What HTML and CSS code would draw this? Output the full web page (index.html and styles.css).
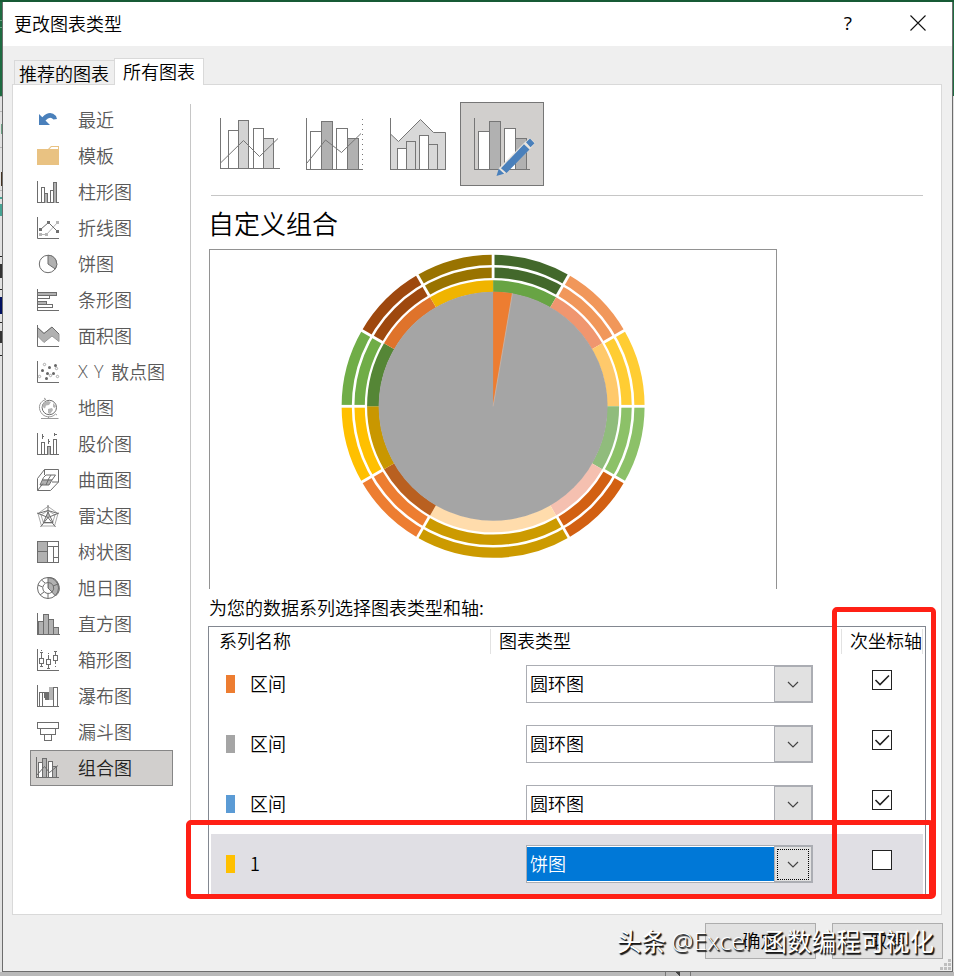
FILE: index.html
```html
<!DOCTYPE html>
<html lang="zh-CN">
<head>
<meta charset="utf-8">
<title>更改图表类型</title>
<link rel="stylesheet" href="styles.css">
</head>
<body>
<div class="desktop">
<div class="backdrop" aria-hidden="true">
<svg width="954" height="976" viewBox="0 0 954 976" shape-rendering="crispEdges">
<rect width="954" height="976" fill="#e1e1e1"/><rect width="954" height="96" fill="#1e6b41"/><rect y="0" width="954" height="2" fill="#175a35"/>
<path d="M0 96h3M0 111.5h3M0 147.5h3M0 190.5h3" stroke="#b5b5b5"/>
<path d="M0 256.5h3M0 289.5h3M0 322.5h3M0 355.5h3" stroke="#222"/>
<path d="M1.5 172v14" stroke="#432"/><path d="M0 198h2M1 204v12" stroke="#45a393" stroke-width="2"/><path d="M1 297v17" stroke="#001060" stroke-width="2"/><path d="M1 264v14M1 331v12" stroke="#333" stroke-width="2"/><path d="M0 20h2v7h-2M1 124v10" stroke="#6aa183" fill="none"/>
<rect y="972" width="954" height="4" fill="#b9b9b9"/><path d="M665.500 972v4M690 972v4" stroke="#777"/><path d="M675 972h5v4z" fill="#444"/>
</svg>
</div>
<main class="dialog">
<header class="titlebar"><h1>更改图表类型</h1>
<span class="help">?</span>
<svg class="close" width="16" height="16" viewBox="0 0 16 16"><path d="M.5.500l15 15M15.500.500l-15 15"/></svg>
</header>
<nav class="tabs"><span class="tab">推荐的图表</span><span class="tab active">所有图表</span></nav>
<section class="panel">
<ul class="types">
<li><svg class="ic" viewBox="0 0 24 24"><path d="M3 6l3.300 3.200Q14 1.500 20 8l1 3-3.500.500Q14 7.500 9.500 12.500L14 17H3z" fill="#4a80bb"/></svg>最近</li>
<li><svg class="ic" viewBox="0 0 24 24"><path d="M1 5h11l3-3h8v19H1z" fill="#e9c282"/><path d="M13.500 5l2-2H22v2z" fill="#fff" class="plain"/></svg>模板</li>
<li><svg class="ic px" viewBox="0 0 24 24"><path d="M1.500 1v21.500H23M5.500 22V7.500h3V22M14.500 22V10.500h3"/><path class="g" d="M8.500 22.500v-9h3v9M17.500 22.500v-20h3v20"/></svg>柱形图</li>
<li><svg class="ic" viewBox="0 0 24 24"><path d="M1.500 1v21.500H23"/><path d="M4.500 18.500h6l11-12" style="stroke:#b5b5b5"/><path d="M4.500 13.500l8-7 9 9"/><path d="M3 17h3v3H3zM9 17h3v3H9zM20 5h3v3h-3z" fill="#b5b5b5" style="stroke:none"/><path d="M3 12h3v3H3zM11 5h3v3h-3zM20 14h3v3h-3z" fill="#707070" style="stroke:none"/></svg>折线图</li>
<li><svg class="ic" viewBox="0 0 24 24"><circle cx="12" cy="12" r="8.700"/><path class="g" d="M12 3.300V12l7.300 5A8.700 8.700 0 0 0 12 3.300z"/></svg>饼图</li>
<li><svg class="ic px" viewBox="0 0 24 24"><path d="M1.500 1v21.500H23M1.500 10.500h12v-3M1.500 16.500h15v3H1.500"/><path class="g" d="M1.500 4.500h19v3h-19zM1.500 13.500h9v3h-9z"/></svg>条形图</li>
<li><svg class="ic" viewBox="0 0 24 24"><path class="g" d="M1.500 3.500L8 9.500 16 3l7 7v7.500L16 12l-8 6.500L1.500 12z" style="stroke:#999"/><path d="M1.500 1v21.500H23M1.500 3.500L8 9.500 16 3l7 7"/></svg>面积图</li>
<li><svg class="ic" viewBox="0 0 24 24"><path d="M1.500 1v21.500H23"/><g fill="#666" style="stroke:none"><circle cx="6.500" cy="10.500" r="1.500"/><circle cx="13.500" cy="7.500" r="1.500"/><circle cx="19.500" cy="5.500" r="1.500"/><circle cx="11.500" cy="13.500" r="1.500"/><circle cx="17.500" cy="13.500" r="1.500"/><circle cx="10.500" cy="18.500" r="1.500"/></g><g style="stroke:#aaa"><circle cx="8.500" cy="4.500" r="1.200"/><circle cx="20.500" cy="8.500" r="1.200"/><circle cx="3.500" cy="16.500" r="1.200"/><circle cx="14.500" cy="15.500" r="1.200"/><circle cx="21.500" cy="16.500" r="1.200"/></g></svg><span class="latin">X Y </span>散点图</li>
<li><svg class="ic" viewBox="0 0 24 24"><path d="M8 2l2 1.500C4 5 1.500 11 5 16.500c3 5 10.500 6 14.500 1.500l1.500 1M12.500 20.500v2M5 22.500h17.500" style="stroke:#999"/><circle cx="13.300" cy="11.500" r="7.200"/><path d="M8 6l4-1 3 1-2 3-3 .5-1 3-3-2zM12 13l4-1 1 2-3 4-2-1zM17 7l3 3-1 2-2-1z" fill="#b5b5b5" style="stroke:none"/></svg>地图</li>
<li><svg class="ic px" viewBox="0 0 24 24"><path d="M1.500 1v21.500H23M5.500 22V10.500h3V22M17.500 22V7.500h3V22M6.500 2v5M6 4.500h2M12.500 7v5M12 9.500h2M18.500 1v3M18 2.500h3"/><path class="g" d="M11.500 22.500v-8h3v8"/></svg>股价图</li>
<li><svg class="ic" viewBox="0 0 24 24"><path class="g" d="M4 17l3-5.500h9L13 17z" style="stroke:none"/><path d="M1.500 10.500l7-9h14V14l-8 8.500h-13zM1.500 22.500L7 15.500M8.500 1.500V7M22.500 14H16M4 17l3.500-7.500L10 7h9.500L16 12l-3 5zM6 12h10M10 17l2.500-6L15 7"/></svg>曲面图</li>
<li><svg class="ic" viewBox="0 0 24 24"><path d="M12 2.500l10 7L18.500 22h-13L2 9.500zM12 6.500l7 4.500-2.500 8h-9L5 11z" style="stroke:#aaa"/><path d="M12 1v12.500L1 9M12 13.500L23 9M12 13.500l7.500 9.500M12 13.500L4.500 23M2 9.500l10-3 10 3M7.500 18.500L12 8l5 10.500z"/></svg>雷达图</li>
<li><svg class="ic px" viewBox="0 0 24 24"><path class="g" d="M1.500 1.500h10v21h-10z"/><path d="M11.500 1.500h11v21h-11M1.500 11.500h10M11.500 6.500h11M17.500 6.500v16M17.500 17.500h5"/></svg>树状图</li>
<li><svg class="ic" viewBox="0 0 24 24"><path class="g" d="M12 1.500V12l7.500 8A10.500 10.500 0 0 0 12 1.500z"/><circle cx="12" cy="12" r="10.500"/><path d="M12 6.500a5.500 5.500 0 1 0 4 9.500L12 12z" fill="#fff"/><path d="M12 6.500a5.500 5.500 0 0 1 4 9.500M6.500 11L2 9M8 16l-4 3M12 17.500v5M17 10l5-2M9 7L5.500 4"/></svg>旭日图</li>
<li><svg class="ic px" viewBox="0 0 24 24"><path class="g" d="M2.500 22.500v-13h5v13zM7.500 22.500v-20h5v20zM12.500 22.500v-15h5v15zM17.500 22.500v-7h5v7z"/><path d="M1.500 1v21.500H24"/></svg>直方图</li>
<li><svg class="ic px" viewBox="0 0 24 24"><path d="M1.500 1v21.500H23M3.500 10.500h4v5h-4zM10.500 11.500h4v5h-4zM17.500 7.500h4v5h-4zM5.500 4v6M5.500 16v3M4 18.500h3M4 4.500h3M12.500 7v4M12.500 17v3M11 20.500h3M12 5.500h1M19.500 3v4M19.500 13v3M18 3.500h3M19 18.500h1M5 2.500h1"/></svg>箱形图</li>
<li><svg class="ic px" viewBox="0 0 24 24"><path d="M1.500 1v21.500H23M3.500 22V8.500h3V22M6.500 8.500h2M17.500 22V3.500h4V22"/><path d="M8 8h5v8H9v-2H8z" fill="#707070" style="stroke:none"/><path d="M13 3h4v13h-4z" fill="#b5b5b5" style="stroke:none"/></svg>瀑布图</li>
<li><svg class="ic px" viewBox="0 0 24 24"><path d="M1.500 2.500h21v6h-21zM4.500 8.500h15v6h-15zM8.500 14.500h7v6h-7z"/></svg>漏斗图</li>
<li class="selected"><svg class="ic" viewBox="0 0 24 24"><g shape-rendering="crispEdges"><path d="M2.500 21.500v-15h4v15M12.500 21.500v-16h4v16" fill="#fff"/><path class="g" d="M6.500 21.500v-19h4v19M16.500 21.500v-11h4v11"/><path d="M.500 1v20.500H23"/></g><path d="M1 19l7.500-8.500 5 6 8.500-7"/></svg>组合图</li>
</ul>
<div class="content">
<div class="variants">
<svg class="variant" viewBox="0 0 84 84"><g shape-rendering="crispEdges"><path d="M20.500 66.500v-38h10v38M45.500 66.500v-40h10v40" fill="#fff"/><path d="M30.500 66.500v-48h10v48M55.500 66.500v-30h10v30" fill="#d3d3d3"/><path d="M12.500 16v50.500H72"/></g><path d="M12.500 61l23-22.500 16 16L70 36.500"/></svg>
<svg class="variant" viewBox="0 0 84 84"><g shape-rendering="crispEdges"><path d="M18.500 67.500v-38h11v38M44.500 67.500v-41h11v41" fill="#fff"/><path d="M29.500 67.500v-48h11v48M55.500 67.500v-31h11v31" fill="#b1b1b1"/><path d="M14.500 16v51.500H71"/><path d="M70.500 17v50" stroke-dasharray="1 4"/></g><path d="M15 61l18.500-23 16 12.500L69 31.500"/></svg>
<svg class="variant" viewBox="0 0 84 84"><path d="M14.500 32l8 7.500 22-22 13 13H70v37H14.500z" fill="#d8d8d8" style="stroke:none"/><path d="M14.500 32l8 7.500 22-22 13 13H69.500v37"/><g shape-rendering="crispEdges"><path d="M21.500 67.500v-21h9v21M43.500 67.500v-34h9v34" fill="#fff"/><path d="M30.500 67.500v-28h9v28M52.500 67.500v-25h9v25" fill="#d8d8d8"/><path d="M14.500 16v51.500H70"/></g></svg>
<svg class="variant chosen" viewBox="0 0 84 84"><g shape-rendering="crispEdges"><path d="M.500.500h83v83H.500z" fill="#d1cfcd"/><path d="M18.500 67.500v-38h11v38M44.500 67.500v-41h11v41" fill="#fff"/><path d="M29.500 67.500v-48h11v48M55.500 67.500v-31h11v31" fill="#b1b1b1"/><path d="M14.500 16v51.500H70"/></g><path d="M37 74l2-8 27-27 4-3 5 5-4 5-27 26z" fill="#e8e4df" style="stroke:none"/><path d="M36.500 74l2.200-7.200 5.500 5zM41 66.200L64 42.300l5.500 5.200L46.500 71zM66 40.300L70 36.500l4.500 4.800-4 4z" fill="#4a80bb" style="stroke:none"/></svg>
</div>
<h2>自定义组合</h2>
<div class="chart">
<svg width="566" height="338" viewBox="210 250 566 338"><g transform="translate(493.100 406.300)">
<g transform="rotate(-90)" fill="none">
<g class="outer">
<circle r="139.900" stroke="#43682b" pathLength="360" stroke-dasharray="30 330"/>
<circle r="139.900" stroke="#f1975a" transform="rotate(30)" pathLength="360" stroke-dasharray="30 330"/>
<circle r="139.900" stroke="#ffcd33" transform="rotate(60)" pathLength="360" stroke-dasharray="30 330"/>
<circle r="139.900" stroke="#8cc168" transform="rotate(90)" pathLength="360" stroke-dasharray="30 330"/>
<circle r="139.900" stroke="#d26012" transform="rotate(120)" pathLength="360" stroke-dasharray="30 330"/>
<circle r="139.900" stroke="#cc9a00" transform="rotate(150)" pathLength="360" stroke-dasharray="60 300"/>
<circle r="139.900" stroke="#ed7d31" transform="rotate(210)" pathLength="360" stroke-dasharray="30 330"/>
<circle r="139.900" stroke="#ffc000" transform="rotate(240)" pathLength="360" stroke-dasharray="30 330"/>
<circle r="139.900" stroke="#70ad47" transform="rotate(270)" pathLength="360" stroke-dasharray="30 330"/>
<circle r="139.900" stroke="#9e480e" transform="rotate(300)" pathLength="360" stroke-dasharray="30 330"/>
<circle r="139.900" stroke="#997300" transform="rotate(330)" pathLength="360" stroke-dasharray="30 330"/>
</g>
<circle r="140" stroke="#fff" stroke-width="2.600"/>
<g stroke="#fff" stroke-width="2.800"><path id="ray" d="M126 0h28"/><use href="#ray" transform="rotate(30)"/><use href="#ray" transform="rotate(60)"/><use href="#ray" transform="rotate(90)"/><use href="#ray" transform="rotate(120)"/><use href="#ray" transform="rotate(150)"/><use href="#ray" transform="rotate(210)"/><use href="#ray" transform="rotate(240)"/><use href="#ray" transform="rotate(270)"/><use href="#ray" transform="rotate(300)"/><use href="#ray" transform="rotate(330)"/></g>
<g class="inner">
<circle r="120" stroke="#68a444" pathLength="360" stroke-dasharray="30 330"/>
<circle r="120" stroke="#f0966f" transform="rotate(30)" pathLength="360" stroke-dasharray="30 330"/>
<circle r="120" stroke="#ffc96b" transform="rotate(60)" pathLength="360" stroke-dasharray="30 330"/>
<circle r="120" stroke="#90bc7c" transform="rotate(90)" pathLength="360" stroke-dasharray="30 330"/>
<circle r="120" stroke="#f5c0b0" transform="rotate(120)" pathLength="360" stroke-dasharray="30 330"/>
<circle r="120" stroke="#ffdcac" transform="rotate(150)" pathLength="360" stroke-dasharray="60 300"/>
<circle r="120" stroke="#b96020" transform="rotate(210)" pathLength="360" stroke-dasharray="30 330"/>
<circle r="120" stroke="#c99700" transform="rotate(240)" pathLength="360" stroke-dasharray="30 330"/>
<circle r="120" stroke="#558636" transform="rotate(270)" pathLength="360" stroke-dasharray="30 330"/>
<circle r="120" stroke="#df732b" transform="rotate(300)" pathLength="360" stroke-dasharray="30 330"/>
<circle r="120" stroke="#f0b400" transform="rotate(330)" pathLength="360" stroke-dasharray="30 330"/>
</g></g>
<circle r="114.500" fill="#a5a5a5"/><path d="M0 0V-114.500A114.500 114.500 0 0 1 19.300 -112.900z" fill="#ed7d31"/><path d="M0 0L19.300 -112.900" stroke="#c9b8ad" stroke-width=".8"/>
</g></svg>
</div>
<p class="caption">为您的数据系列选择图表类型和轴:</p>
<div class="table">
<div class="row head"><span>系列名称</span><span>图表类型</span><span>次坐标轴</span></div>
<div class="row"><span class="name"><i class="key orange"></i>区间</span><div class="combo"><span>圆环图</span><b><svg viewBox="0 0 12 7"><path d="M1 1l5 5 5-5"/></svg></b></div><div class="check"><svg viewBox="0 0 20 20"><path d="M3.500 10l4.500 4.500L17 5.500"/></svg></div></div>
<div class="row"><span class="name"><i class="key gray"></i>区间</span><div class="combo"><span>圆环图</span><b><svg viewBox="0 0 12 7"><path d="M1 1l5 5 5-5"/></svg></b></div><div class="check"><svg viewBox="0 0 20 20"><path d="M3.500 10l4.500 4.500L17 5.500"/></svg></div></div>
<div class="row"><span class="name"><i class="key blue"></i>区间</span><div class="combo"><span>圆环图</span><b><svg viewBox="0 0 12 7"><path d="M1 1l5 5 5-5"/></svg></b></div><div class="check"><svg viewBox="0 0 20 20"><path d="M3.500 10l4.500 4.500L17 5.500"/></svg></div></div>
<div class="row current"><span class="name"><i class="key yellow"></i>1</span><div class="combo"><span>饼图</span><b><svg viewBox="0 0 12 7"><path d="M1 1l5 5 5-5"/></svg></b></div><div class="check"></div></div>
</div>
</div>
</section>
<footer class="actions"><button>确定</button><button>取消</button></footer>
<svg class="grip" width="11" height="11" viewBox="0 0 11 11"><path d="M8 0h3v3H8zM4 4h3v3H4zM8 4h3v3H8zM0 8h3v3H0zM4 8h3v3H4zM8 8h3v3H8z"/></svg>
</main>
<div class="mark mark-column"></div>
<div class="mark mark-row"></div>
<div class="watermark">头条 <span>@Excel</span>函数编程可视化</div>
</div>
</body>
</html>
```
FILE: styles.css
```css
* { box-sizing: border-box; }
body { margin: 0; font: 350 18px/24px "Noto Sans CJK SC", sans-serif; color: #000; }
h1, h2, p, ul { margin: 0; padding: 0; font-weight: inherit; }
svg { display: block; }
.desktop { position: relative; width: 954px; height: 976px; overflow: hidden; padding: 2px 1px 4px 2px; }
.backdrop { position: absolute; inset: 0; }
.dialog { position: relative; height: 970px; background: #efefef; border: 1px solid #6d6d6d; border-top: 0; display: flex; flex-direction: column; }
.titlebar { height: 44px; background: #fff; display: flex; align-items: center; padding: 0 26px 2px 11px; flex: none; }
.titlebar h1 { flex: 1; font-size: 18px; }
.help { font: 19px "Open Sans", sans-serif; margin-right: 58px; }
.close { stroke: #111; stroke-width: 1.1; fill: none; }
.tabs { height: 39px; padding: 12px 0 0 11px; display: flex; align-items: flex-end; position: relative; z-index: 1; margin-bottom: -1px; flex: none; }
.tab { height: 25px; width: 100px; border: 1px solid #d9d9d9; border-right: 0; border-bottom: 0; padding-left: 4px; line-height: 24px; white-space: nowrap; }
.tab.active { height: 27px; width: 90px; background: #fff; border-right: 1px solid #d9d9d9; padding-left: 8px; line-height: 24px; }
.panel { width: 930px; height: 831px; margin-left: 9px; border: 1px solid #d9d9d9; background: #fff; display: flex; padding-top: 17px; flex: none; }
.types { list-style: none; width: 178px; height: 795px; margin-top: 2px; border-right: 1px solid #c6c6c6; padding: 0 17px; flex: none; color: #595959; }
.types li { height: 36px; width: 143px; padding-left: 6px; display: flex; align-items: center; white-space: pre; line-height: 24px; padding-bottom: 2px; }
.types li:first-child { margin-top: -2px; }
.types .selected { background: #d1cfcd; box-shadow: inset 0 0 0 1px #868686; color: #222; }
.ic { width: 24px; height: 24px; margin: 2px 18px 0 0; flex: none; fill: none; }
.ic path, .ic circle { stroke: #6d6d6d; }
.ic path[fill="#4a80bb"], .ic path[fill="#e9c282"], .ic .plain { stroke: none; }
.ic g[style] circle { stroke: inherit; }
.ic .g { fill: #b1b1b1; }
.px { shape-rendering: crispEdges; }
.latin { font-family: "Open Sans", sans-serif; font-weight: 300; letter-spacing: .4px; word-spacing: .8px; width: 33px; }
.content { flex: 1; padding-left: 17px; }
.variants { display: flex; height: 94px; width: 715px; margin-bottom: 11px; background: linear-gradient(#c6c6c6, #c6c6c6) 3px 100% / 712px 1px no-repeat; }
.variant { width: 84px; height: 84px; fill: none; stroke: #767676; }
h2 { font-size: 26px; line-height: 32px; height: 42px; }
.chart { width: 568px; height: 340px; margin-left: 1px; border: 1px solid #929292; border-bottom: 0; }
.outer circle { stroke-width: 23.2; }
.inner circle { stroke-width: 12; }
.caption { height: 37px; line-height: 37px; padding-left: 1px; }
.table { width: 718px; height: 268px; border: 1px solid #828790; border-bottom: 0; padding: 0 2px; }
.row { height: 60px; display: grid; grid-template-columns: 315px 346px 1fr; padding: 11px 0; }
.row.head { height: 27px; grid-template-columns: 280px 351px 81px; padding: 2px 0 0; }
.head span { border-right: 1px solid #e2e2e2; padding-left: 8px; white-space: nowrap; line-height: 23px; }
.name { display: flex; align-items: center; padding-left: 15px; line-height: 22px; padding-bottom: 2px; }
.key { width: 9px; height: 18px; margin: 2px 15px 0 0; }
.orange { background: #ed7d31; }
.gray { background: #a5a5a5; }
.blue { background: #5b9bd5; }
.yellow { background: #ffc000; }
.combo { width: 287px; height: 38px; border: 1px solid #abadb3; background: #fff; display: flex; }
.combo span { flex: 1; padding-left: 3px; line-height: 34px; }
.combo b { width: 38px; height: 36px; border: 1px solid #abadb3; background: #e1e1e1; display: grid; place-items: center; }
.combo b svg { width: 12px; height: 7px; fill: none; stroke: #444; stroke-width: 1.2; }
.check { width: 20px; height: 20px; border: 1px solid #222; background: #fff; margin-top: 5px; }
.check svg { width: 20px; height: 20px; margin: -1px; fill: none; stroke: #222; stroke-width: 1.6; }
.current { background: #e0dfe4; }
.current .combo span { background: #0078d7; color: #fff; margin: 1px 0; line-height: 32px; }
.current .combo b svg { outline: 1px dotted #000; padding: 11px 9px; width: 30px; height: 29px; }
.actions { display: flex; justify-content: flex-end; gap: 16px; padding: 8px 9px 0 0; }
.actions button { width: 111px; height: 36px; border: 1px solid #adadad; background: #e1e1e1; font: inherit; line-height: 32px; padding: 0 0 2px; color: #000; }
.grip { position: absolute; right: 1px; bottom: 1px; fill: #bfbfbf; }
.mark { position: absolute; border: 5px solid #ff2015; border-radius: 5px; }
.mark-column { left: 832px; top: 607px; width: 104px; height: 292px; }
.mark-row { left: 186px; top: 820px; width: 748px; height: 79px; }
.watermark { position: absolute; left: 617px; top: 923px; font-size: 24.5px; line-height: 36px; font-weight: 400; color: #fff; white-space: nowrap; display: flex; white-space: pre; text-shadow: 1px 1px 1px #111, 1.5px 1.5px 1px #222; }
.watermark span { font-family: "Open Sans", sans-serif; font-weight: 300; width: 91px; letter-spacing: .2px; }
```
